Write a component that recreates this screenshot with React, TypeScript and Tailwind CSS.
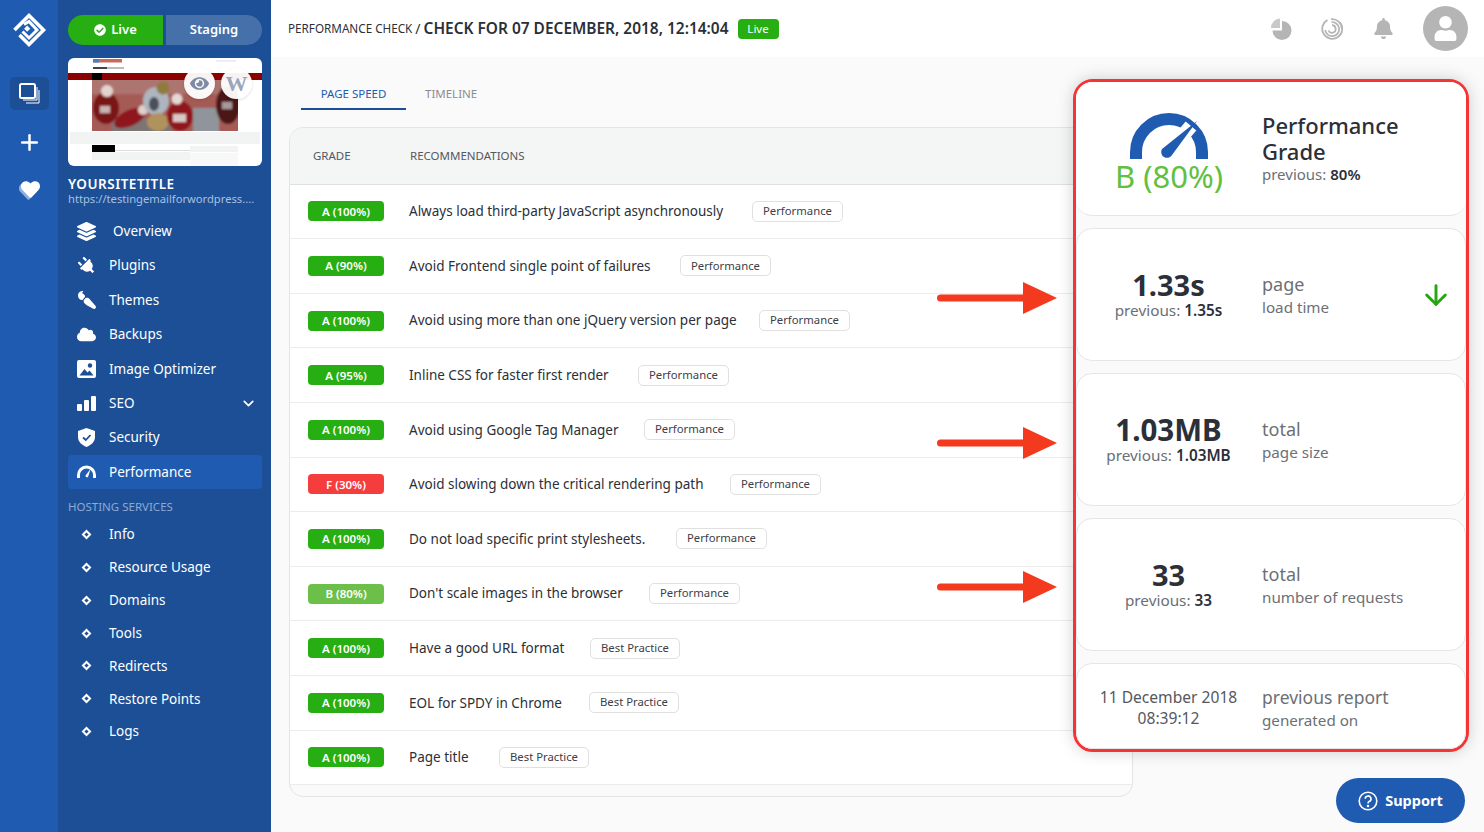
import React from 'react';
import { FaLayerGroup, FaPlug, FaPaintBrush, FaCloud, FaBell, FaUser, FaEye, FaHeart, FaCheckCircle } from 'react-icons/fa';
import { ChevronDown, ArrowDown, Plus } from 'lucide-react';

const BLUE = '#1f5cb1';

const Logo = () => (
    <svg width="36" height="36" viewBox="0 0 36 36" fill="none" stroke="#fff">
        <path d="M3.5 18 L18 3.5 L32.5 18 L18 32.5 L8.5 23" strokeWidth="3.6" />
        <path d="M13 12.5 L18 9.5 L26 18 L18 26 L11.5 19.5" strokeWidth="3" />
        <rect x="14" y="14.5" width="4.4" height="4.4" transform="rotate(45 16.2 16.7)" fill="#fff" stroke="none" />
    </svg>
);

const Gauge = ({ size = 80, color = BLUE }: { size?: number; color?: string }) => (
    <svg width={size} height={size * 0.6} viewBox="0 0 80 48">
        <path d="M7 47 V40 A33 33 0 0 1 73 40 V47" fill="none" stroke={color} strokeWidth="12" />
        <path d="M62 14 L38 42" stroke="#fff" strokeWidth="14" />
        <path d="M68 9 L43 43 A5.5 5.5 0 0 1 33 37 Z" fill={color} />
    </svg>
);

const SeoBars = () => (
    <svg width="19" height="15" viewBox="0 0 19 15" fill="#fff">
        <rect x="0" y="8" width="5" height="7" rx="1" />
        <rect x="7" y="4" width="5" height="11" rx="1" />
        <rect x="14" y="0" width="5" height="15" rx="1" />
    </svg>
);

const Shield = () => (
    <svg width="17" height="19" viewBox="0 0 17 19">
        <path d="M8.5 0 L17 3 V9 C17 14 13 17 8.5 19 C4 17 0 14 0 9 V3 Z" fill="#fff" />
        <path d="M5 9.5 L7.8 12 L12.5 7" fill="none" stroke="#1c4f96" strokeWidth="1.8" />
    </svg>
);

const SmallGauge = () => (
    <svg width="19" height="13" viewBox="0 0 19 13">
        <path d="M1.5 13 V10 A8 8 0 0 1 17.5 10 V13" fill="none" stroke="#fff" strokeWidth="3" />
        <path d="M13.5 4 L8.5 10.5 A1.6 1.6 0 0 0 11 12 Z" fill="#fff" />
    </svg>
);

const ImageIcon = () => (
    <svg width="19" height="18" viewBox="0 0 19 18">
        <rect width="19" height="18" rx="2" fill="#fff" />
        <circle cx="13" cy="5.5" r="2.2" fill="#1c4f96" />
        <path d="M2.5 15.5 L7.5 9 L10.5 12.5 L12.5 10.5 L16.5 15.5 Z" fill="#1c4f96" />
    </svg>
);

const Pie = () => (
    <svg width="22" height="22" viewBox="0 0 22 22">
        <path d="M11 3 A9.5 9.5 0 1 1 1.5 12.5 H11 Z" fill="#b5b5b5" />
        <path d="M9 0.5 V10 H0 A9.5 9.5 0 0 1 9 0.5 Z" fill="#c9c9c9" />
    </svg>
);

const Spiral = () => (
    <svg width="22" height="22" viewBox="0 0 22 22" fill="none" stroke="#b5b5b5" strokeWidth="1.8">
        <path d="M6.5 2 A10 10 0 1 0 19 4.5" />
        <path d="M10 1.2 A10 10 0 0 1 21 11" />
        <path d="M10.5 4.2 A7 7 0 1 1 4.2 12" />
        <path d="M11 7.2 A3.8 3.8 0 1 1 7.4 12.5" />
    </svg>
);

const Thumbnail = () => (
    <div className="relative h-[108px] w-[194px] overflow-hidden rounded-[6px] bg-white">
        <svg width="194" height="108" viewBox="0 0 194 108">
            <defs>
                <filter id="soft" x="-5%" y="-5%" width="110%" height="110%">
                    <feGaussianBlur stdDeviation="1" />
                </filter>
                <clipPath id="photo">
                    <rect x="24" y="22" width="146" height="51" />
                </clipPath>
            </defs>
            <rect x="25" y="1" width="29" height="3.5" fill="#c96a5c" />
            <rect x="25" y="1" width="6" height="3.5" fill="#4c7fc0" />
            <rect x="25" y="9" width="14" height="2" fill="#444" />
            <rect x="39" y="9" width="17" height="2" fill="#bbb" />
            <rect x="148" y="2" width="20" height="2" fill="#eee" />
            <rect x="0" y="15" width="194" height="7" fill="#8b0000" />
            <rect x="24" y="15" width="10" height="7" fill="#000" />
            <g clipPath="url(#photo)">
                <g filter="url(#soft)">
                    <rect x="20" y="18" width="154" height="60" fill="#a65a56" />
                    <rect x="20" y="18" width="154" height="18" fill="#ad7470" />
                    <rect x="44" y="60" width="60" height="15" fill="#7d7573" />
                    <rect x="125" y="50" width="26" height="25" fill="#8f959a" />
                    {/* left player */}
                    <ellipse cx="38" cy="50" rx="13" ry="16" fill="#7a1519" />
                    <circle cx="39" cy="33" r="6" fill="#e4d4d0" />
                    <rect x="32" y="48" width="10" height="7" fill="#c9b4b0" />
                    {/* crouching player */}
                    <ellipse cx="62" cy="60" rx="17" ry="8" transform="rotate(-25 62 60)" fill="#8f151b" />
                    <circle cx="75" cy="52" r="5" fill="#e0d0cc" />
                    {/* centre player */}
                    <ellipse cx="88" cy="43" rx="13" ry="14" fill="#aeb5bf" />
                    <circle cx="95" cy="30" r="6.5" fill="#8f7b3e" />
                    <ellipse cx="86" cy="46" rx="5" ry="7" fill="#4b4f59" />
                    <ellipse cx="90" cy="64" rx="11" ry="9" fill="#b0935c" />
                    {/* right player */}
                    <ellipse cx="112" cy="58" rx="13" ry="15" fill="#8f151b" />
                    <circle cx="109" cy="41" r="5.5" fill="#e6d8d4" />
                    <rect x="105" y="56" width="13" height="8" fill="#d9c8c4" />
                    {/* far right */}
                    <ellipse cx="160" cy="47" rx="12" ry="19" fill="#4c1519" />
                    <rect x="154" y="44" width="10" height="7" fill="#a8989a" />
                </g>
            </g>
            <rect x="2" y="74" width="190" height="12" fill="#f2f3f3" />
            <rect x="24" y="87" width="23" height="7" fill="#000" />
            <rect x="47" y="92" width="75" height="1" fill="#ddd" />
            <rect x="24" y="94" width="98" height="8" fill="#f2f3f3" />
            <rect x="122" y="88" width="48" height="6" fill="#f2f3f3" />
            <rect x="122" y="95" width="48" height="13" fill="#f8f8f8" />
        </svg>
        <div className="absolute left-[116px] top-[10px] flex h-[31px] w-[31px] items-center justify-center rounded-full bg-white/95 text-[#7e8ba3] shadow-[0_1px_3px_rgba(0,0,0,0.15)]">
            <FaEye size={19} />
        </div>
        <div className="absolute left-[153px] top-[10px] flex h-[31px] w-[31px] items-center justify-center rounded-full bg-white/95 font-['Liberation_Serif',serif] text-[22px] font-bold text-[#98a6bd] shadow-[0_1px_3px_rgba(0,0,0,0.15)]">
            W
        </div>
    </div>
);

const navItems: { label: string; icon: React.ReactNode; gap?: string; chevron?: boolean; active?: boolean }[] = [
    { label: 'Overview', icon: <FaLayerGroup size={19} />, gap: 'pl-[17px]' },
    { label: 'Plugins', icon: <FaPlug size={18} className="-rotate-45" /> },
    { label: 'Themes', icon: <FaPaintBrush size={18} className="rotate-90" /> },
    { label: 'Backups', icon: <FaCloud size={19} /> },
    { label: 'Image Optimizer', icon: <ImageIcon /> },
    { label: 'SEO', icon: <SeoBars />, chevron: true },
    { label: 'Security', icon: <Shield /> },
    { label: 'Performance', icon: <SmallGauge />, active: true },
];

const hosting = ['Info', 'Resource Usage', 'Domains', 'Tools', 'Redirects', 'Restore Points', 'Logs'];

const rows = [
    ['A (100%)', 'Always load third-party JavaScript asynchronously', 'Performance', 'w-[315px]'],
    ['A (90%)', 'Avoid Frontend single point of failures', 'Performance', 'w-[243px]'],
    ['A (100%)', 'Avoid using more than one jQuery version per page', 'Performance', 'w-[322px]'],
    ['A (95%)', 'Inline CSS for faster first render', 'Performance', 'w-[201px]'],
    ['A (100%)', 'Avoid using Google Tag Manager', 'Performance', 'w-[207px]'],
    ['F (30%)', 'Avoid slowing down the critical rendering path', 'Performance', 'w-[293px]'],
    ['A (100%)', 'Do not load specific print stylesheets.', 'Performance', 'w-[239px]'],
    ['B (80%)', "Don't scale images in the browser", 'Performance', 'w-[212px]'],
    ['A (100%)', 'Have a good URL format', 'Best Practice', 'w-[153px]'],
    ['A (100%)', 'EOL for SPDY in Chrome', 'Best Practice', 'w-[152px]'],
    ['A (100%)', 'Page title', 'Best Practice', 'w-[62px]'],
];

const gradeClass = (g: string) => {
    if (g.startsWith('F')) return 'bg-[#f53d3d]';
    if (g.startsWith('B')) return 'bg-[#6cc04a]';
    return 'bg-[#27ae12]';
};

const StatCard = ({ value, valueSize, previous, top, bottom, arrow }: { value: string; valueSize: string; previous: string; top: string; bottom: string; arrow?: boolean }) => (
    <div className="flex h-[133px] items-center rounded-[16px] border border-[#e6e6e6] bg-white">
        <div className="w-[185px] pr-[2px] text-center">
            <div className={`${valueSize} leading-[30px] font-bold text-[#2b2f38]`}>{value}</div>
            <div className="text-[15.3px] leading-[20px] text-[#6b6f76]">
                previous: <span className="font-semibold text-[#2b2f38]">{previous}</span>
            </div>
        </div>
        <div className="flex-1">
            <div className="text-[18px] leading-[24px] text-[#6b6f76]">{top}</div>
            <div className="text-[15.2px] leading-[22px] text-[#6b6f76]">{bottom}</div>
        </div>
        {arrow && <ArrowDown size={32} strokeWidth={2.2} className="mr-[13px] text-[#27a512]" />}
    </div>
);

const RedArrow = ({ top }: { top: number }) => (
    <svg className="absolute left-[937px]" style={{ top }} width="120" height="32" viewBox="0 0 120 32">
        <rect x="0" y="12.5" width="90" height="7" rx="3.5" fill="#f43a1e" />
        <path d="M86 0 L120 16 L86 32 Z" fill="#f43a1e" />
    </svg>
);

export default function App() {
    return (
        <div className="relative flex h-[832px] w-[1484px] overflow-hidden bg-[#fafafa] font-['Noto_Sans',sans-serif] text-[#2b2f38]">
            {/* icon rail */}
            <div className="flex w-[58px] flex-col items-center bg-[#1f5cb1] pt-[12px] text-white">
                <Logo />
                <div className="mt-[29px] flex h-[33px] w-[39px] items-center justify-center rounded-[5px] bg-[#1c4f96]">
                    <svg width="21" height="21" viewBox="0 0 21 21" fill="none" stroke="#fff">
                        <rect x="1" y="1" width="15" height="14" rx="1.5" strokeWidth="2" />
                        <path d="M18 4 V17 H4 M20 7 V20 H7" strokeWidth="1" />
                    </svg>
                </div>
                <Plus size={25} strokeWidth={2.4} className="mt-[20px]" />
                <div className="relative mt-[25px] h-[20px] w-[21px]">
                    <FaHeart size={19} className="absolute left-0 top-[2px] text-white/50" />
                    <FaHeart size={19} className="absolute left-[2px] top-0" />
                </div>
            </div>

            {/* sidebar */}
            <div className="w-[213px] shrink-0 bg-[#1c4f96] pl-[10px] pr-[9px] pt-[15px] text-white">
                <div className="flex h-[30px] w-[194px]">
                    <div className="flex w-[95px] items-center justify-center gap-[5px] rounded-l-full bg-[#27ae12] text-[13px] font-semibold">
                        <FaCheckCircle size={12} />
                        Live
                    </div>
                    <div className="ml-[3px] flex flex-1 items-center justify-center rounded-r-full bg-[#4670aa] text-[13px] font-semibold">Staging</div>
                </div>
                <div className="mt-[13px]">
                    <Thumbnail />
                </div>
                <div className="mt-[10px] text-[13.5px] leading-[16px] font-semibold tracking-[0.5px]">YOURSITETITLE</div>
                <div className="w-[194px] truncate text-[11.2px] leading-[14px] text-[#a9c0e0]">https://testingemailforwordpress....</div>
                <div className="mt-[8px]">
                    {navItems.map((item) => (
                        <div key={item.label} className={`flex h-[34.4px] items-center rounded-[4px] pl-[9px] text-[13.5px] ${item.active ? 'bg-[#1f5cb1]' : ''}`}>
                            <span className="flex w-[19px] justify-center">{item.icon}</span>
                            <span className={item.gap ?? 'pl-[13px]'}>{item.label}</span>
                            {item.chevron && <ChevronDown size={17} strokeWidth={2.4} className="ml-auto mr-[5px]" />}
                        </div>
                    ))}
                </div>
                <div className="mt-[10px] text-[11.5px] leading-[15px] text-[#8caad6]">HOSTING SERVICES</div>
                <div className="mt-[4px]">
                    {hosting.map((h) => (
                        <div key={h} className="flex h-[32.85px] items-center pl-[15px] text-[13.5px]">
                            <span className="h-[7px] w-[7px] rotate-45 border-2 border-white bg-[#1c4f96]" />
                            <span className="pl-[19px]">{h}</span>
                        </div>
                    ))}
                </div>
            </div>

            {/* main */}
            <div className="flex-1">
                <div className="flex h-[57px] items-center bg-white pl-[17px]">
                    <span className="text-[11.7px]">PERFORMANCE CHECK</span>
                    <span className="ml-[3px] text-[14px]">/</span>
                    <span className="ml-[3px] text-[15.45px] font-semibold">CHECK FOR 07 DECEMBER, 2018, 12:14:04</span>
                    <span className="ml-[9px] flex h-[20px] w-[41px] items-center justify-center rounded-[4px] bg-[#27ae12] text-[11.5px] text-white">Live</span>
                    <div className="ml-auto flex items-center text-[#b5b5b5]">
                        <Pie />
                        <span className="ml-[28px]"><Spiral /></span>
                        <FaBell size={21} className="ml-[30px]" />
                        <div className="ml-[29px] mr-[16px] flex h-[45px] w-[45px] items-center justify-center rounded-full bg-[#b5b5b5] text-white">
                            <FaUser size={25} />
                        </div>
                    </div>
                </div>

                <div className="pl-[18px]">
                    <div className="ml-[12px] mt-[19px] flex h-[34px] text-[11.5px]">
                        <div className="flex w-[105px] items-center justify-center border-b-2 border-[#1c4f96] pt-[4px] text-[#1f5cb1]">PAGE SPEED</div>
                        <div className="ml-[19px] flex items-center border-b-2 border-transparent pt-[4px] text-[#8a8d92]">TIMELINE</div>
                    </div>
                    <div className="mt-[17px] h-[670px] w-[844px] overflow-hidden rounded-[14px] border border-[#e4e4e4]">
                        <div className="flex h-[56.6px] items-center border-b border-[#e0e0e0] bg-[#f4f5f5] text-[11.5px] text-[#55585e]">
                            <span className="w-[120px] pl-[23px]">GRADE</span>
                            <span>RECOMMENDATIONS</span>
                        </div>
                        {rows.map(([grade, title, tag, width]) => (
                            <div key={title} className="flex h-[54.6px] items-center border-b border-[#ececec] bg-white pl-[18px]">
                                <span className={`flex h-[20px] w-[76px] items-center justify-center rounded-[4px] text-[11.5px] font-semibold text-white ${gradeClass(grade)}`}>{grade}</span>
                                <span className={`ml-[25px] shrink-0 whitespace-nowrap text-[13.5px] ${width}`}>{title}</span>
                                <span className="ml-[28px] flex h-[21px] items-center rounded-[5px] border border-[#e0e0e0] bg-white px-[10px] text-[11.3px] text-[#3d4047]">{tag}</span>
                            </div>
                        ))}
                    </div>
                </div>
            </div>

            {/* highlighted summary panel */}
            <div className="absolute left-[1073px] top-[79px] flex h-[673px] w-[396px] flex-col gap-[12px] rounded-[20px] border-[3px] border-[#f53535] bg-[#fafafa] shadow-[0_0_16px_rgba(0,0,0,0.18)]">
                <div className="flex h-[134px] items-center rounded-[16px] border-b border-[#e6e6e6] bg-white">
                    <div className="mt-[6px] flex w-[186px] flex-col items-center">
                        <Gauge />
                        <div className="text-[31px] leading-[32px] text-[#62c03f]">B (80%)</div>
                    </div>
                    <div className="-mt-[2px]">
                        <div className="text-[22px] leading-[26px] font-medium">Performance<br />Grade</div>
                        <div className="text-[15px] leading-[20px] text-[#6b6f76]">
                            previous: <span className="font-semibold text-[#2b2f38]">80%</span>
                        </div>
                    </div>
                </div>
                <StatCard value="1.33s" valueSize="text-[29px]" previous="1.35s" top="page" bottom="load time" arrow />
                <StatCard value="1.03MB" valueSize="text-[29.5px]" previous="1.03MB" top="total" bottom="page size" />
                <StatCard value="33" valueSize="text-[29px]" previous="33" top="total" bottom="number of requests" />
                <div className="flex flex-1 items-center rounded-[16px] border border-[#e6e6e6] bg-white pt-[3px]">
                    <div className="w-[185px] pr-[2px] text-center text-[15.6px] leading-[21px] text-[#55585e]">
                        11 December 2018
                        <br />
                        08:39:12
                    </div>
                    <div>
                        <div className="text-[17.5px] leading-[24px] text-[#6b6f76]">previous report</div>
                        <div className="text-[15.2px] leading-[22px] text-[#6b6f76]">generated on</div>
                    </div>
                </div>
            </div>

            <RedArrow top={282} />
            <RedArrow top={427} />
            <RedArrow top={571} />

            <div className="absolute left-[1336px] top-[778px] flex h-[45px] w-[129px] items-center justify-center gap-[7px] rounded-full bg-[#1f5cb1] text-[14.5px] font-bold text-white">
                <svg width="20" height="20" viewBox="0 0 20 20" fill="none" stroke="#fff" strokeWidth="1.6">
                    <circle cx="10" cy="10" r="8.8" />
                    <path d="M7.2 7.8 A2.9 2.9 0 1 1 11.2 10.5 C10.2 11 10 11.5 10 12.5" />
                    <circle cx="10" cy="15" r="0.5" fill="#fff" />
                </svg>
                Support
            </div>
        </div>
    );
}
